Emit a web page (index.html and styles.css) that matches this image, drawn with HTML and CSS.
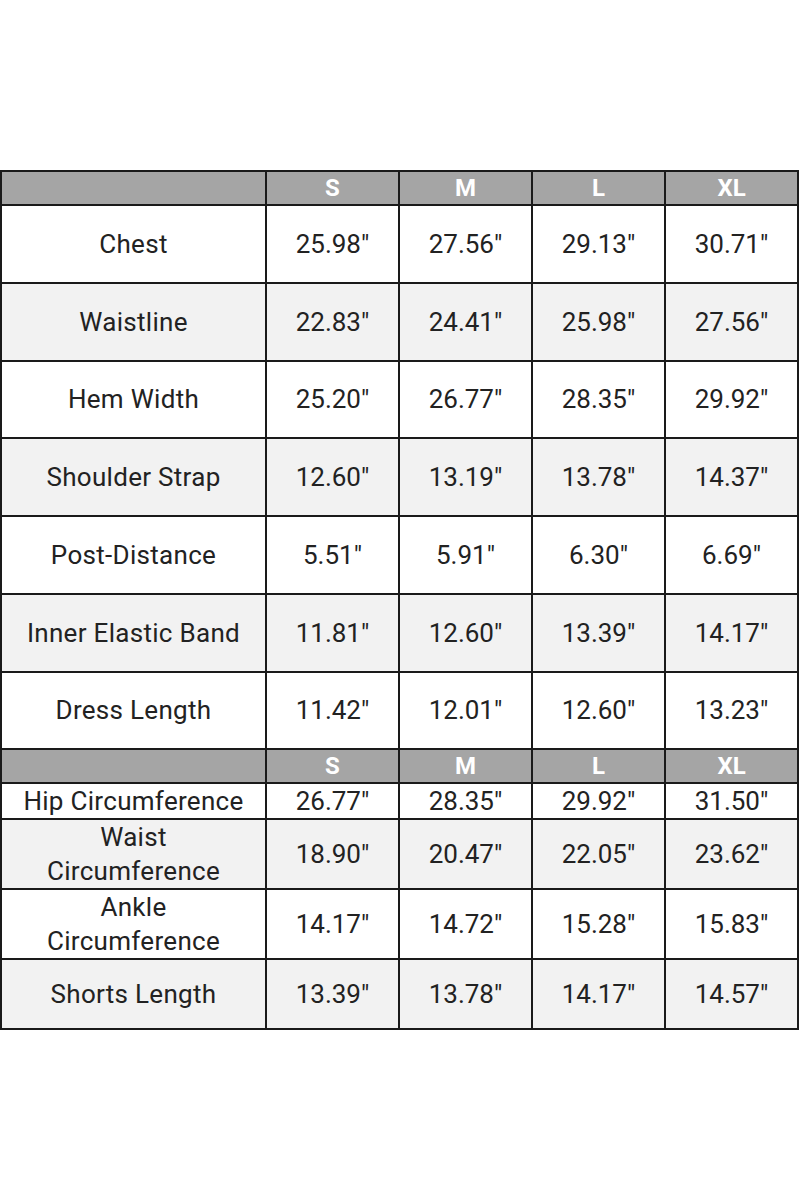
FILE: index.html
```html
<!DOCTYPE html>
<html>
<head>
<meta charset="utf-8">
<link rel="stylesheet" href="styles.css">
</head>
<body>
<div class="page">
<table class="size-table">
  <colgroup>
    <col class="c-label"><col class="c-size"><col class="c-size"><col class="c-size"><col class="c-size">
  </colgroup>
  <tr class="head"><th></th><th>S</th><th>M</th><th>L</th><th>XL</th></tr>
  <tr class="tall"><td>Chest</td><td>25.98"</td><td>27.56"</td><td>29.13"</td><td>30.71"</td></tr>
  <tr class="tall alt"><td>Waistline</td><td>22.83"</td><td>24.41"</td><td>25.98"</td><td>27.56"</td></tr>
  <tr class="tall"><td>Hem Width</td><td>25.20"</td><td>26.77"</td><td>28.35"</td><td>29.92"</td></tr>
  <tr class="tall alt"><td>Shoulder Strap</td><td>12.60"</td><td>13.19"</td><td>13.78"</td><td>14.37"</td></tr>
  <tr class="tall"><td>Post-Distance</td><td>5.51"</td><td>5.91"</td><td>6.30"</td><td>6.69"</td></tr>
  <tr class="tall alt"><td>Inner Elastic Band</td><td>11.81"</td><td>12.60"</td><td>13.39"</td><td>14.17"</td></tr>
  <tr class="tall"><td>Dress Length</td><td>11.42"</td><td>12.01"</td><td>12.60"</td><td>13.23"</td></tr>
  <tr class="head"><th></th><th>S</th><th>M</th><th>L</th><th>XL</th></tr>
  <tr class="short"><td>Hip Circumference</td><td>26.77"</td><td>28.35"</td><td>29.92"</td><td>31.50"</td></tr>
  <tr class="mid alt"><td>Waist<br>Circumference</td><td>18.90"</td><td>20.47"</td><td>22.05"</td><td>23.62"</td></tr>
  <tr class="mid"><td>Ankle<br>Circumference</td><td>14.17"</td><td>14.72"</td><td>15.28"</td><td>15.83"</td></tr>
  <tr class="mid alt"><td>Shorts Length</td><td>13.39"</td><td>13.78"</td><td>14.17"</td><td>14.57"</td></tr>
</table>
</div>
</body>
</html>
```
FILE: styles.css
```css
html, body {
  margin: 0;
  padding: 0;
  background: #ffffff;
}
.page {
  width: 800px;
  height: 1200px;
  padding-top: 170px;
  box-sizing: border-box;
}
.size-table {
  width: 798px;
  border-collapse: collapse;
  table-layout: fixed;
  font-family: Roboto, "Liberation Sans", sans-serif;
  font-size: 26px;
  color: #222222;
}
.c-label { width: 265px; }
.c-size { width: 133px; }
.size-table td, .size-table th {
  border: 2px solid #1a1a1a;
  text-align: center;
  vertical-align: middle;
  padding: 0;
  line-height: 34px;
}
.size-table td:first-child {
  letter-spacing: 0.3px;
}
.head th {
  background: #a5a5a5;
  color: #ffffff;
  font-size: 24px;
  font-weight: bold;
  height: 32px;
  line-height: 30px;
}
.tall td { height: 75.75px; background: #ffffff; }
.short td { height: 34px; line-height: 30px; background: #ffffff; }
.mid td { height: 68px; background: #ffffff; }
.alt td { background: #f2f2f2; }
```
